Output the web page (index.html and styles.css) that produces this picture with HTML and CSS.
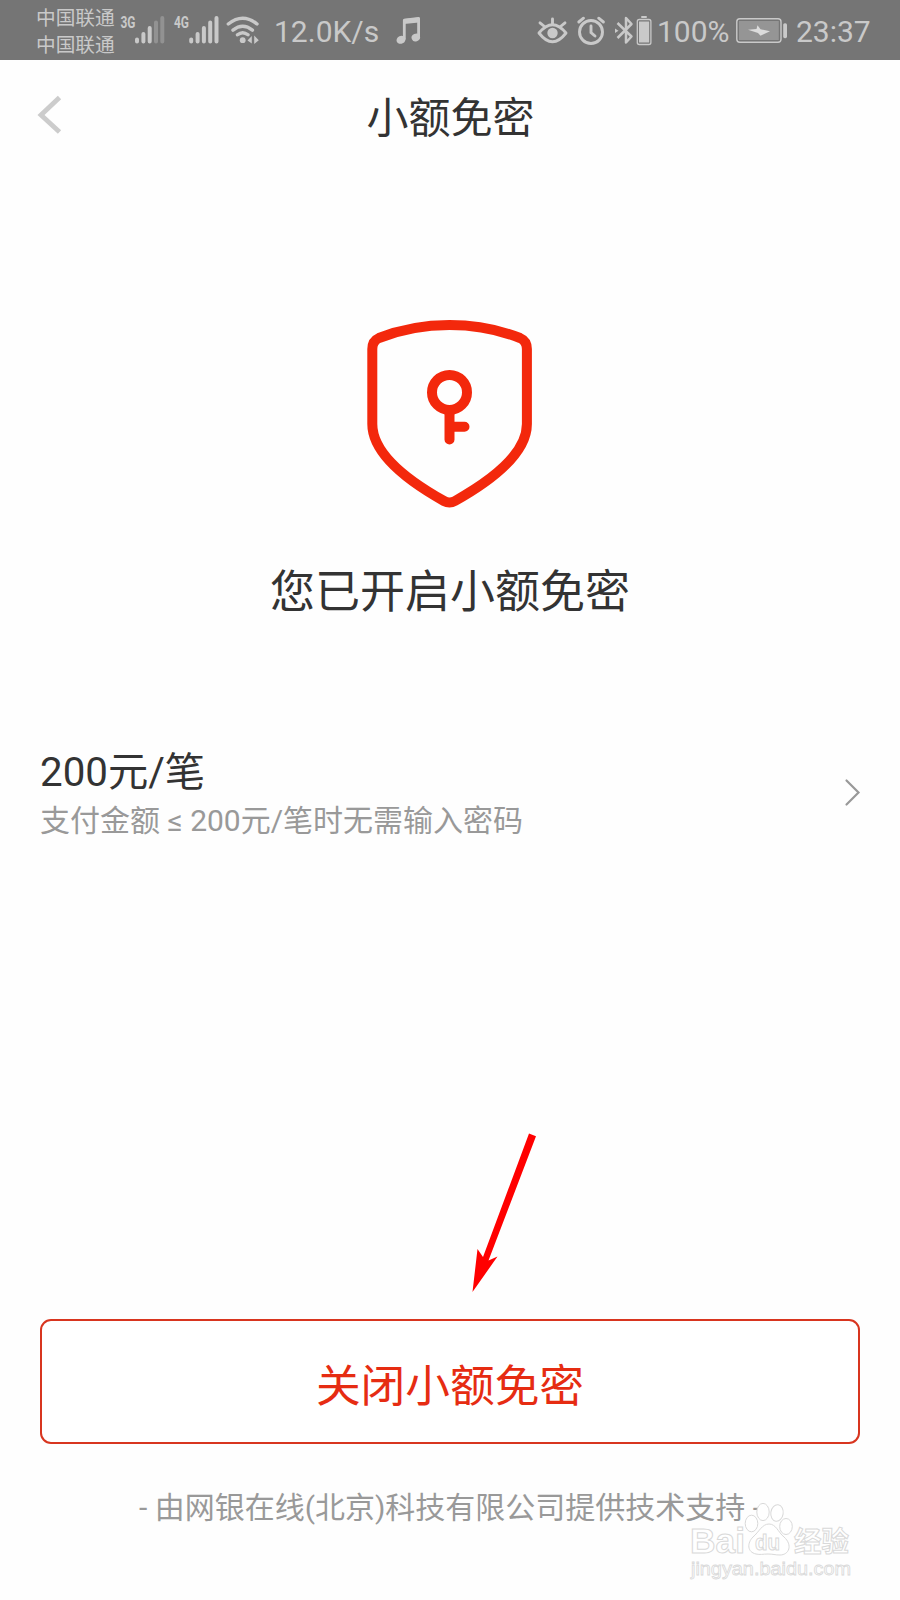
FILE: index.html
```html
<!DOCTYPE html>
<html lang="zh-CN">
<head>
  <meta charset="UTF-8">
  <title>小额免密</title>
  <link rel="stylesheet" href="styles.css">
</head>
<body>

  <!-- Status bar -->
  <div class="status-bar">
    <div class="status-left">
      <div class="carriers">
        <span>中国联通</span>
        <span>中国联通</span>
      </div>
      <svg class="icon" width="52" height="60" viewBox="118 0 52 60">
        <text class="net" x="120.5" y="28" textLength="15" lengthAdjust="spacingAndGlyphs">3G</text>
        <g stroke="#c9c9c9" stroke-width="4" stroke-linecap="round">
          <path d="M137 39.5V41.5M143.4 34V41.5M149.7 28V41.5"/>
          <path d="M156 22.5V41.5M162.3 18V41.5" stroke="#929292"/>
        </g>
      </svg>
      <svg class="icon" width="54" height="60" viewBox="170 0 54 60">
        <text class="net" x="174" y="28" textLength="15" lengthAdjust="spacingAndGlyphs">4G</text>
        <path d="M191.2 39.5V41.5M197.6 34V41.5M203.9 28V41.5M210.2 22.5V41.5M216.5 18V41.5" stroke="#c9c9c9" stroke-width="4" stroke-linecap="round"/>
      </svg>
      <svg class="icon" width="50" height="60" viewBox="224 0 50 60">
        <g fill="none" stroke="#c9c9c9" stroke-width="3.4" stroke-linecap="round">
          <path d="M228.3 24Q242.7 12.5 257 24M233 30.2Q242.7 22.5 252.4 30.2M237.5 34.8Q242.7 30.5 248 34.8"/>
        </g>
        <circle cx="242.7" cy="40.2" r="2.9" fill="#c9c9c9"/>
        <path d="M251.8 36V43.5L247.5 40.5ZM254.2 35.5V44L258.8 40.2Z" fill="#c9c9c9"/>
      </svg>
      <span class="speed">12.0K/s</span>
      <svg class="icon" width="34" height="60" viewBox="392 0 34 60">
        <path d="M404.3 39.5V20.2L418.6 18.4V37" fill="none" stroke="#c9c9c9" stroke-width="2.8" stroke-linejoin="round"/>
        <path d="M404 19L419 17.5V22.5L404 24Z" fill="#c9c9c9"/>
        <ellipse cx="401" cy="39.8" rx="4.6" ry="3.9" transform="rotate(-25 401 39.8)" fill="#c9c9c9"/>
        <ellipse cx="415.8" cy="37.5" rx="4.3" ry="3.8" transform="rotate(-25 415.8 37.5)" fill="#c9c9c9"/>
      </svg>
    </div>
    <div class="status-right">
      <svg class="icon" width="38" height="60" viewBox="536 0 38 60">
        <g fill="none" stroke="#c9c9c9" stroke-width="2.9" stroke-linecap="round">
          <path d="M539 33Q552.5 16.5 566 33Q552.5 50.5 539 33Z" stroke-linejoin="round"/>
          <path d="M552.5 24V19M544.5 26.5L540 22.8M560.5 26.5L565 22.8"/>
        </g>
        <circle cx="552.5" cy="33" r="5.2" fill="#c9c9c9"/>
      </svg>
      <svg class="icon" width="36" height="60" viewBox="574 0 36 60">
        <g fill="none" stroke="#c9c9c9" stroke-width="2.9" stroke-linecap="round">
          <circle cx="591" cy="32" r="11.5"/>
          <path d="M591 26V32.5L595 36M578.8 22L583.5 18.2M598.7 18.2L603.4 22"/>
        </g>
      </svg>
      <svg class="icon" width="24" height="60" viewBox="610 0 24 60">
        <path d="M617.5 23L631.5 36.5L626 42.5V18L631.5 24L617.5 38" fill="none" stroke="#c9c9c9" stroke-width="2.5" stroke-linejoin="round"/>
        <path d="M615 28.5L618.5 30.7L615 32.9Z" fill="#c9c9c9"/>
      </svg>
      <svg class="icon" width="23" height="60" viewBox="634 0 23 60">
        <rect x="637.3" y="19.5" width="13.6" height="25" rx="2" fill="none" stroke="#c9c9c9" stroke-width="1.3"/>
        <rect x="639" y="21.5" width="10.2" height="21" fill="#c9c9c9"/>
        <rect x="641" y="16" width="6" height="2" rx="1" fill="#c9c9c9"/>
      </svg>
      <span class="percent">100%</span>
      <svg class="icon" width="60" height="60" viewBox="734 0 60 60">
        <rect x="736.8" y="18.8" width="44.2" height="23.4" rx="3" fill="none" stroke="#c9c9c9" stroke-width="1.4"/>
        <rect x="739" y="21" width="39.8" height="19" fill="#959595"/>
        <rect x="783.2" y="23.2" width="3.8" height="15" rx="1.6" fill="#c9c9c9"/>
        <path d="M748 29.7L758 33L760.5 35.8L770 31.2L760.5 29.2L757.5 25.2L756.5 29Z" fill="#dcdcdc"/>
      </svg>
      <span class="clock">23:37</span>
    </div>
  </div>

  <header class="nav">
    <svg class="back" width="26" height="40" viewBox="0 0 26 40">
      <path d="M23.5 2.5L5 20L23.5 37" fill="none" stroke="#ccc" stroke-width="4.8"/>
    </svg>
    <h1>小额免密</h1>
  </header>

  <main>
    <section class="hero">
      <!-- Shield with key -->
      <svg class="shield" width="168" height="190" viewBox="366 318 168 190">
        <g fill="none" stroke="#f3280c" stroke-width="10" stroke-linecap="round" stroke-linejoin="round">
          <path d="M372.3 349Q372.3 341 379 338Q412 325 449.5 325Q487 325 520 338Q526.9 341 526.9 349V424C526.9 452 496 478 455 501Q449.5 504 444 501C403 478 372.3 452 372.3 424Z"/>
          <circle cx="449.5" cy="392.4" r="17.5"/>
          <path d="M449.5 410V439.5M449.5 426.7H464.5"/>
        </g>
      </svg>
      <h2>您已开启小额免密</h2>
    </section>

    <section class="limit">
      <div>
        <p class="amount">200元/笔</p>
        <p class="note">支付金额 ≤ 200元/笔时无需输入密码</p>
      </div>
      <svg width="18" height="30" viewBox="0 0 18 30">
        <path d="M2.5 2.5L14.5 14.5L2.5 26.5" fill="none" stroke="#999" stroke-width="2.2" stroke-linecap="round"/>
      </svg>
    </section>

    <button class="close-btn">关闭小额免密</button>
  </main>

  <footer>- 由网银在线(北京)科技有限公司提供技术支持 -</footer>

  <!-- Pointer over the page -->
  <svg class="pointer" width="70" height="165" viewBox="468 1131 70 165">
    <path d="M529 1133.5L536 1136.2L488.5 1260.5L497.5 1256.5L472.5 1292L477.5 1249L483 1257Z" fill="#f00"/>
  </svg>

  <svg class="watermark" width="170" height="84" viewBox="685 1500 170 84">
    <g fill="#fff" stroke="#d9d9d9" stroke-width="1">
      <text class="logo" x="690" y="1553" textLength="55" lengthAdjust="spacingAndGlyphs">Bai</text>
      <ellipse cx="751.5" cy="1523.5" rx="6.3" ry="8.3"/>
      <ellipse cx="763" cy="1512" rx="6.2" ry="8.6"/>
      <ellipse cx="777" cy="1513" rx="6.2" ry="8.3" transform="rotate(8 777 1513)"/>
      <ellipse cx="786" cy="1526.5" rx="6.3" ry="8"/>
      <path d="M769 1524C776 1524 778 1532 784 1537C793 1545 789 1555 780 1555C775 1555 773 1554 768 1554C763 1554 760 1555 756 1554C747 1552 747 1543 753 1537C759 1532 762 1524 769 1524Z"/>
      <text class="du" x="755" y="1550" textLength="25" lengthAdjust="spacingAndGlyphs">du</text>
      <text class="cn" x="794" y="1552" textLength="55" lengthAdjust="spacingAndGlyphs">经验</text>
      <text class="url" x="691" y="1575" textLength="160" lengthAdjust="spacingAndGlyphs">jingyan.baidu.com</text>
    </g>
  </svg>

</body>
</html>
```

FILE: styles.css
```css
* {
  box-sizing: border-box;
}
body {
  position: relative;
  margin: 0;
  height: 1600px;
  overflow: hidden;
  background: #fefefe;
  color: #333;
  font-family: Roboto, "Noto Sans CJK SC", sans-serif;
}
h1, h2, p {
  margin: 0;
  font-weight: normal;
}
svg {
  display: block;
  flex-shrink: 0;
}

/* status bar */
.status-bar {
  display: flex;
  justify-content: space-between;
  height: 60px;
  padding: 0 28px 0 36px;
  background: #757575;
  color: #c9c9c9;
}
.status-left, .status-right {
  display: flex;
  align-items: center;
}
.carriers {
  display: flex;
  flex-direction: column;
  width: 82px;
  padding-top: 3px;
  font-size: 19.7px;
  line-height: 27px;
  white-space: nowrap;
}
.speed, .percent, .clock {
  padding-top: 3px;
  font-size: 30px;
  line-height: 36px;
  white-space: nowrap;
}
.speed {
  width: 118px;
}
.percent {
  width: 77px;
}
.clock {
  width: 78px;
  padding-left: 2px;
}
.net {
  fill: #c9c9c9;
  font-size: 16px;
  font-weight: bold;
}

/* title */
.nav {
  display: flex;
  align-items: center;
  height: 110px;
  padding: 0 36px;
}
.nav h1 {
  flex: 1;
  margin-right: 25px;
  padding-top: 8px;
  font-size: 42px;
  line-height: 60px;
  text-align: center;
}

.hero {
  display: flex;
  flex-direction: column;
  align-items: center;
  padding-top: 148px;
}
.hero h2 {
  margin-top: 52px;
  font-size: 45px;
  line-height: 66px;
}

/* limit row */
.limit {
  display: flex;
  align-items: center;
  justify-content: space-between;
  margin-top: 119px;
  padding: 0 38px 0 40px;
}
.amount {
  font-size: 40.3px;
  line-height: 56px;
}
.note {
  color: #999;
  font-size: 30px;
  line-height: 40px;
}

.close-btn {
  display: block;
  width: 820px;
  height: 125px;
  margin: 478px auto 0;
  padding: 2px 0 0;
  border: 2px solid #d8351f;
  border-radius: 11px;
  background: #fff;
  color: #e62c12;
  font-family: inherit;
  font-size: 44.7px;
}
footer {
  margin-top: 42px;
  color: #999;
  font-size: 30px;
  line-height: 44px;
  text-align: center;
}

/* overlays */
.pointer {
  position: absolute;
  left: 468px;
  top: 1131px;
}
.watermark {
  position: absolute;
  left: 685px;
  top: 1500px;
}
.logo {
  font: bold 35px "Liberation Sans", sans-serif;
}
.du {
  font: bold 22px "Liberation Sans", sans-serif;
}
.cn {
  font: bold 28px "Noto Sans CJK SC", sans-serif;
}
.url {
  font: 19px "Liberation Sans", sans-serif;
  stroke-width: 0.8px;
}
```
